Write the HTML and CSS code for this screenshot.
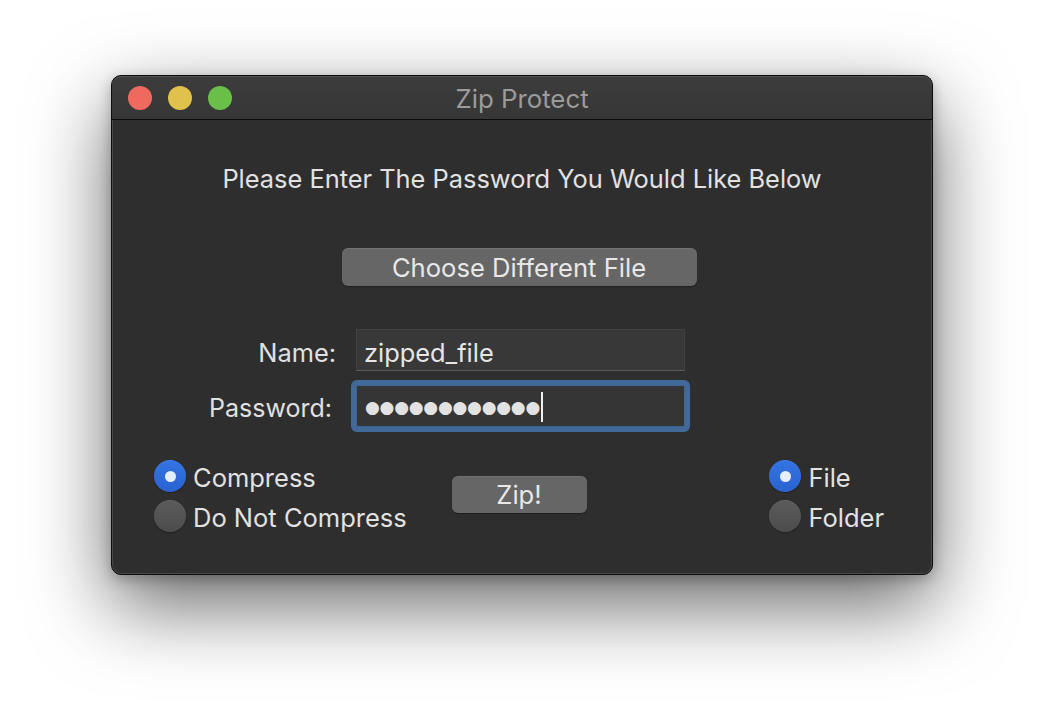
FILE: index.html
```html
<!DOCTYPE html>
<html>
<head>
<meta charset="utf-8">
<link rel="stylesheet" href="styles.css">
</head>
<body>
<div class="window">
  <div class="titlebar">
    <div class="lights">
      <span class="light red"></span>
      <span class="light yellow"></span>
      <span class="light green"></span>
    </div>
    <div class="title">Zip Protect</div>
    <div></div>
  </div>
  <div class="content">
    <div class="heading">Please Enter The Password You Would Like Below</div>
    <div class="btn choose">Choose Different File</div>
    <div class="form">
      <div class="label">Name:</div>
      <div class="field">zipped_file</div>
      <div class="label pw">Password:</div>
      <div class="field focus"><span class="dots">●●●●●●●●●●●●</span><span class="caret"></span></div>
    </div>
    <div class="bottom">
      <div class="group">
        <div class="radio-row"><span class="radio on"></span><span class="rl">Compress</span></div>
        <div class="radio-row"><span class="radio"></span><span class="rl">Do Not Compress</span></div>
      </div>
      <div class="btn zip">Zip!</div>
      <div class="group right">
        <div class="radio-row"><span class="radio on"></span><span class="rl">File</span></div>
        <div class="radio-row"><span class="radio"></span><span class="rl">Folder</span></div>
      </div>
    </div>
  </div>
</div>
</body>
</html>
```
FILE: styles.css
```css
html, body {
  margin: 0;
  padding: 0;
  background: #ffffff;
}
body {
  font-family: Inter, "Liberation Sans", sans-serif;
  width: 1044px;
  height: 722px;
  overflow: hidden;
}
.window {
  box-sizing: border-box;
  margin: 75px 0 0 111px;
  width: 822px;
  height: 500px;
  border: 1px solid #0c0c0c;
  border-radius: 10px;
  background: #2e2e2e;
  box-shadow: inset 0 0 0 1px rgba(255,255,255,0.13), 0 30px 80px rgba(0,0,0,0.6), 0 4px 14px rgba(0,0,0,0.25);
  overflow: hidden;
  color: #dedede;
}
.titlebar {
  height: 43px;
  border-bottom: 1px solid #0a0a0a;
  background: linear-gradient(#3c3c3c, #363636);
  display: grid;
  grid-template-columns: 1fr auto 1fr;
  align-items: center;
  border-radius: 9px 9px 0 0;
  box-shadow: inset 0 1px 0 rgba(255,255,255,0.12);
}
.lights {
  display: flex;
  gap: 16px;
  padding-left: 16px;
}
.light {
  width: 24px;
  height: 24px;
  border-radius: 50%;
}
.red { background: #ee695e; }
.yellow { background: #e0c14c; }
.green { background: #69bf47; }
.title {
  font-size: 25.8px;
  color: #9b9b9b;
  padding-top: 2px;
}
.content {
  display: flex;
  flex-direction: column;
  align-items: center;
  padding: 43px 6px 0 0;
}
.heading {
  font-size: 25.4px;
  line-height: 32px;
  color: #e2e2e2;
  margin-left: 6px;
}
.btn {
  box-sizing: border-box;
  background: #666666;
  border-radius: 6px;
  color: #e8e8e8;
  font-size: 25.6px;
  display: flex;
  align-items: center;
  justify-content: center;
  box-shadow: inset 0 1px 0 rgba(255,255,255,0.08), 0 1px 1px rgba(0,0,0,0.35);
}
.choose {
  margin-top: 53px;
  width: 355px;
  height: 38px;
}
.form {
  box-sizing: border-box;
  margin-top: 43px;
  display: grid;
  grid-template-columns: 1fr 329px 1fr;
  row-gap: 14px;
  width: 100%;
  padding-left: 3px;
  align-items: center;
}
.form .label {
  grid-column: 1;
  text-align: right;
  padding-right: 20px;
  padding-top: 5px;
  font-size: 25.4px;
  color: #e0e0e0;
}
.form .label.pw {
  padding-right: 24px;
  padding-top: 4px;
  font-size: 25px;
}
.field {
  grid-column: 2;
  box-sizing: border-box;
  height: 42px;
  background: #383838;
  border: 1px solid #414141;
  border-bottom-color: #5a5a5a;
  display: flex;
  align-items: center;
  padding: 4px 0 0 7px;
  font-size: 25.4px;
  color: #e6e6e6;
}
.field.focus {
  background: #353535;
  border: 1px solid #3d6590;
  box-shadow: 0 0 0 5px #41699a;
  border-radius: 2px;
  padding: 2px 0 0 8px;
}
.dots {
  font-size: 17px;
  letter-spacing: -0.25px;
  color: #e2e2e2;
  font-family: "DejaVu Sans", sans-serif;
}
.caret {
  width: 2px;
  height: 30px;
  background: #f0f0f0;
  margin-left: 1px;
}
.bottom {
  margin-top: 33px;
  width: 100%;
  box-sizing: border-box;
  display: grid;
  grid-template-columns: 1fr auto 1fr;
  padding: 0 42px 0 42px;
}
.group {
  display: flex;
  flex-direction: column;
  gap: 8px;
}
.group.right {
  justify-self: end;
}
.radio-row {
  display: flex;
  align-items: center;
  gap: 7px;
  height: 32px;
  font-size: 25.5px;
  color: #e2e2e2;
}
.rl {
  padding-top: 3px;
}
.radio {
  box-sizing: border-box;
  width: 32px;
  height: 32px;
  border-radius: 50%;
  background: linear-gradient(#5b5b5b, #4c4c4c);
  box-shadow: inset 0 1px 0 rgba(255,255,255,0.06), 0 1px 1px rgba(0,0,0,0.3);
  display: flex;
  align-items: center;
  justify-content: center;
}
.radio.on {
  background: linear-gradient(#3474e4, #2a62d0);
}
.radio.on::after {
  content: "";
  width: 11px;
  height: 11px;
  border-radius: 50%;
  background: #e6edfb;
}
.zip {
  align-self: start;
  margin-top: 16px;
  width: 135px;
  height: 37px;
}
```
